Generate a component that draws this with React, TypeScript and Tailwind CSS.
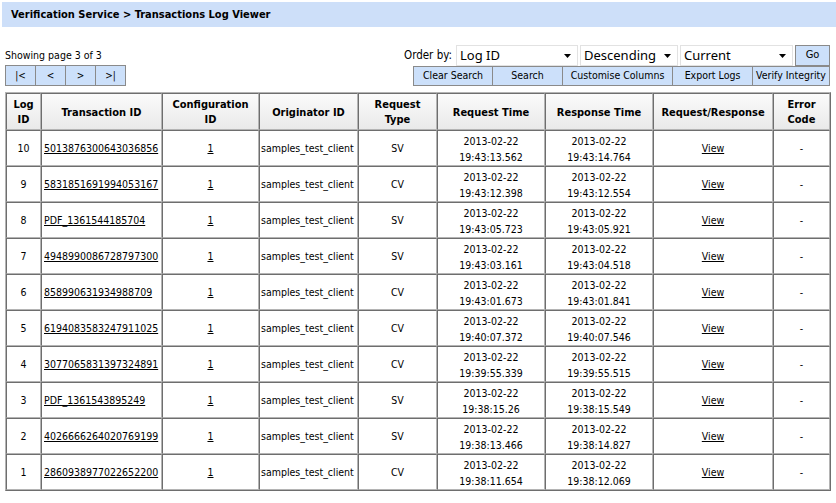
import type { ReactNode } from "react";

type LogRow = {
  id: number;
  txId: string;
  type: "SV" | "CV";
  request: string;
  response: string;
};

const rows: LogRow[] = [
  { id: 10, txId: "5013876300643036856", type: "SV", request: "19:43:13.562", response: "19:43:14.764" },
  { id: 9, txId: "5831851691994053167", type: "CV", request: "19:43:12.398", response: "19:43:12.554" },
  { id: 8, txId: "PDF_1361544185704", type: "SV", request: "19:43:05.723", response: "19:43:05.921" },
  { id: 7, txId: "4948990086728797300", type: "SV", request: "19:43:03.161", response: "19:43:04.518" },
  { id: 6, txId: "858990631934988709", type: "CV", request: "19:43:01.673", response: "19:43:01.841" },
  { id: 5, txId: "6194083583247911025", type: "CV", request: "19:40:07.372", response: "19:40:07.546" },
  { id: 4, txId: "3077065831397324891", type: "CV", request: "19:39:55.339", response: "19:39:55.515" },
  { id: 3, txId: "PDF_1361543895249", type: "SV", request: "19:38:15.26", response: "19:38:15.549" },
  { id: 2, txId: "4026666264020769199", type: "SV", request: "19:38:13.466", response: "19:38:14.827" },
  { id: 1, txId: "2860938977022652200", type: "CV", request: "19:38:11.654", response: "19:38:12.069" },
];

const columns = [
  { label: ["Log", "ID"], width: 35 },
  { label: ["Transaction ID"], width: 121 },
  { label: ["Configuration", "ID"], width: 97 },
  { label: ["Originator ID"], width: 99 },
  { label: ["Request", "Type"], width: 79 },
  { label: ["Request Time"], width: 108 },
  { label: ["Response Time"], width: 108 },
  { label: ["Request/Response"], width: 120 },
  { label: ["Error", "Code"], width: 57 },
];

const cellBorder =
  "border border-t-[#6e6e6e] border-l-[#6e6e6e] border-r-[#b4b4b4] border-b-[#b4b4b4]";

export default function App() {
  return (
    <div className="min-h-[503px] w-[836px] bg-white font-['Tahoma','DejaVu_Sans_Condensed','Liberation_Sans',sans-serif] text-[11px] text-black">
      <div className="ml-[2px] mt-[2px] flex h-[25px] items-center bg-[#cddff9] pl-[9px] pt-[1px] text-[11px] font-bold">
        Verification Service &gt; Transactions Log Viewer
      </div>

      <div className="mt-[18px] flex items-end justify-between pl-[5px] pr-[6px]">
        <div className="flex flex-col">
          <span className="mb-[3px] text-[10.5px] leading-[13px]">Showing page 3 of 3</span>
          <div className="flex">
            <PagerButton>|&lt;</PagerButton>
            <PagerButton>&lt;</PagerButton>
            <PagerButton>&gt;</PagerButton>
            <PagerButton>&gt;|</PagerButton>
          </div>
        </div>

        <div className="flex flex-col items-end">
          <div className="flex items-center gap-[2px]">
            <span className="mr-[2px] text-[11.5px]">Order by:</span>
            <SelectBox label="Log ID" width="w-[122px]" />
            <SelectBox label="Descending" width="w-[98px]" />
            <SelectBox label="Current" width="w-[113px]" />
            <button
              type="button"
              className="h-[21px] w-[35px] border border-[#8a8a8a] bg-[#cce0fa] text-[11px]"
            >
              Go
            </button>
          </div>
          <div className="flex">
            <ActionButton width="w-[80px]">Clear Search</ActionButton>
            <ActionButton width="w-[71px]">Search</ActionButton>
            <ActionButton width="w-[111px]">Customise Columns</ActionButton>
            <ActionButton width="w-[81px]">Export Logs</ActionButton>
            <ActionButton width="w-[78px]">Verify Integrity</ActionButton>
          </div>
        </div>
      </div>

      <div className="ml-[5px] mt-[6px] w-[826px]">
        <table className="w-full table-fixed border-separate border-spacing-0 border border-t-[#b4b4b4] border-l-[#b4b4b4] border-r-[#6e6e6e] border-b-[#6e6e6e] text-[10.5px]">
          <colgroup>
            {columns.map((col, i) => (
              <col key={i} style={{ width: col.width }} />
            ))}
          </colgroup>
          <thead>
            <tr className="h-[37px]">
              {columns.map((col, i) => (
                <th
                  key={i}
                  className={`${cellBorder} bg-gradient-to-b from-[#fbfbfb] to-[#e9e9e9] px-[2px] pt-[1px] text-center text-[11px] font-bold leading-[15px]`}
                >
                  {col.label.map((line) => (
                    <div key={line}>{line}</div>
                  ))}
                </th>
              ))}
            </tr>
          </thead>
          <tbody>
            {rows.map((row) => (
              <tr key={row.id} className="h-[36px]">
                <td className={`${cellBorder} pt-[2px] text-center`}>{row.id}</td>
                <td className={`${cellBorder} px-[2px] pt-[2px] text-left`}>
                  <a href="#" className="underline">
                    {row.txId}
                  </a>
                </td>
                <td className={`${cellBorder} pt-[2px] text-center`}>
                  <a href="#" className="underline">
                    1
                  </a>
                </td>
                <td className={`${cellBorder} px-[1px] pt-[2px] text-left`}>samples_test_client</td>
                <td className={`${cellBorder} pt-[2px] text-center`}>{row.type}</td>
                <td className={`${cellBorder} pt-[2px] text-center leading-[16px]`}>
                  <div>2013-02-22</div>
                  <div>{row.request}</div>
                </td>
                <td className={`${cellBorder} pt-[2px] text-center leading-[16px]`}>
                  <div>2013-02-22</div>
                  <div>{row.response}</div>
                </td>
                <td className={`${cellBorder} pt-[2px] text-center`}>
                  <a href="#" className="underline">
                    View
                  </a>
                </td>
                <td className={`${cellBorder} pt-[2px] text-center`}>-</td>
              </tr>
            ))}
          </tbody>
        </table>
      </div>
    </div>
  );
}

function PagerButton({ children }: { children: ReactNode }) {
  return (
    <button
      type="button"
      className="-ml-px h-[21px] w-[31px] border border-[#8a8a8a] bg-[#cce0fa] text-[10px] first:ml-0"
    >
      {children}
    </button>
  );
}

function ActionButton({ children, width }: { children: ReactNode; width: string }) {
  return (
    <button
      type="button"
      className={`-ml-px h-[20px] ${width} border border-[#8a8a8a] bg-[#cce0fa] text-[10.5px] first:ml-0`}
    >
      {children}
    </button>
  );
}

function SelectBox({ label, width }: { label: string; width: string }) {
  return (
    <div
      className={`flex h-[21px] ${width} items-center justify-between border border-[#e2e2e2] bg-white pl-[3px] pr-[6px] font-['Noto_Sans','Open_Sans',sans-serif] text-[13px] leading-none`}
    >
      <span>{label}</span>
      <svg width="7" height="4" viewBox="0 0 7 4" aria-hidden="true">
        <path d="M0 0h7L3.5 4z" fill="#000" />
      </svg>
    </div>
  );
}
